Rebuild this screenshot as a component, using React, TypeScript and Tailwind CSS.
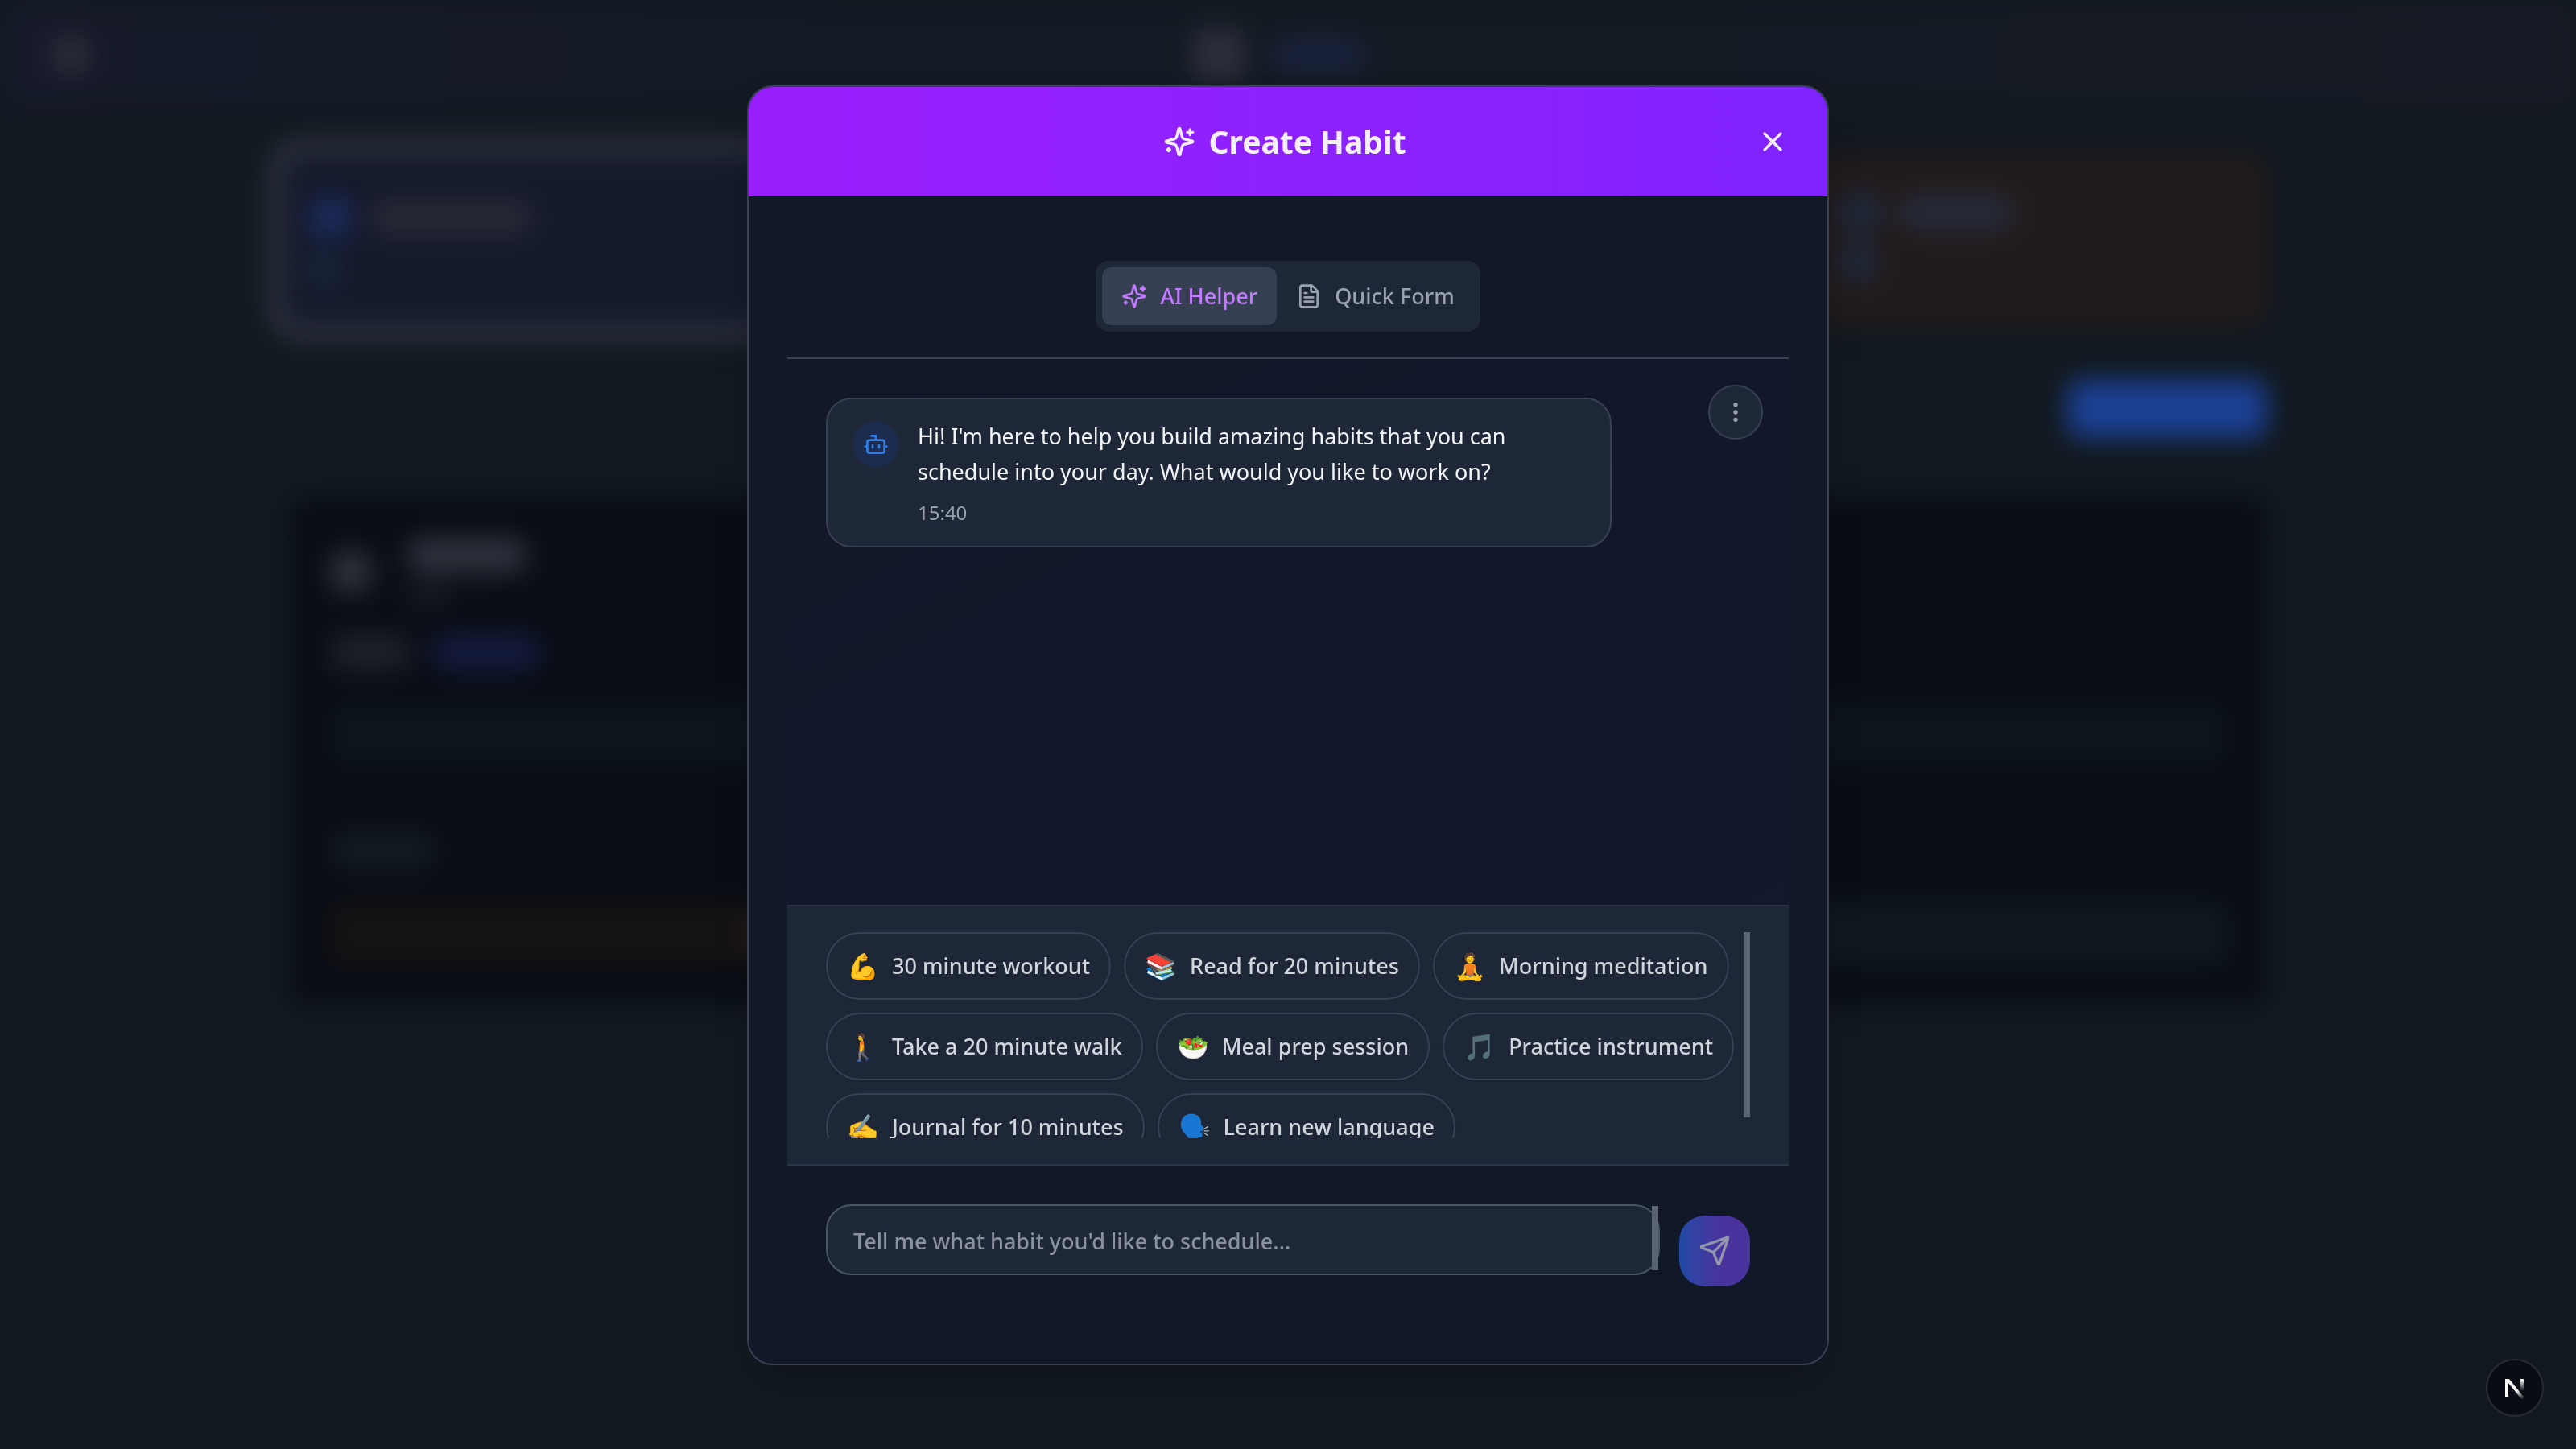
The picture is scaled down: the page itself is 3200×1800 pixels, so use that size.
import { useState } from "react";
import { Bot, EllipsisVertical, FileText, Send, X } from "lucide-react";

const suggestions = [
  { emoji: "💪", label: "30 minute workout" },
  { emoji: "📚", label: "Read for 20 minutes" },
  { emoji: "🧘", label: "Morning meditation" },
  { emoji: "🚶", label: "Take a 20 minute walk" },
  { emoji: "🥗", label: "Meal prep session" },
  { emoji: "🎵", label: "Practice instrument" },
  { emoji: "✍️", label: "Journal for 10 minutes" },
  { emoji: "🗣️", label: "Learn new language" },
];

function SparklesIcon({ className }: { className: string }) {
  return (
    <svg
      viewBox="0 0 24 24"
      fill="none"
      stroke="currentColor"
      strokeWidth="2"
      strokeLinecap="round"
      strokeLinejoin="round"
      className={className}
    >
      <path d="M9.937 15.500A2 2 0 0 0 8.500 14.063l-6.135-1.582a.5.5 0 0 1 0-.962L8.500 9.936A2 2 0 0 0 9.937 8.500l1.582-6.135a.5.5 0 0 1 .963 0L14.063 8.500A2 2 0 0 0 15.500 9.937l6.135 1.581a.5.5 0 0 1 0 .964L15.500 14.063a2 2 0 0 0-1.437 1.437l-1.582 6.135a.5.5 0 0 1-.963 0z" />
      <path d="M20 3v4" />
      <path d="M22 5h-4" />
      <path d="M4 17v2" />
      <path d="M5 18H3" />
    </svg>
  );
}

function Dashboard() {
  return (
    <div
      aria-hidden="true"
      className="min-h-screen overflow-hidden bg-[#121920]"
    >
      <div className="blur-lg">
        <div className="flex h-34 items-center justify-between bg-linear-to-r from-[#161a29] via-[#131a22] to-[#161a24] pr-21 pl-16">
          <div className="size-12 rounded-full bg-[#2d2e3a]" />
          <div className="flex items-center gap-8">
            <div className="size-16 rounded-2xl bg-[#2d2f3b]" />
            <div className="h-10 w-30 rounded-full bg-[#1b2340]" />
          </div>
          <div className="size-12" />
        </div>

        <div className="pr-96 pl-[360px]">
          <div className="mt-14 grid grid-cols-4 gap-8">
            <div className="-mx-3 -my-1 rounded-3xl bg-[#151a2c] px-9 py-14 ring-12 ring-[#41434f]">
              <div className="flex items-center gap-6">
                <div className="size-13 rounded-full bg-[#1b2c5f]" />
                <div className="h-10 w-50 rounded-full bg-[#282a35]" />
              </div>
              <div className="mt-5 size-9 rounded-full bg-[#1a2a41]" />
            </div>
            <div className="rounded-3xl bg-[#1a1c2a]" />
            <div className="rounded-3xl bg-[#1a1c2a]" />
            <div className="rounded-3xl bg-[#221b1c] px-14 py-11">
              <div className="flex items-center gap-5">
                <div className="size-14 rounded-full bg-[#1e283a]" />
                <div className="h-11 w-36 rounded-full bg-[#252b3a]" />
              </div>
              <div className="mt-2 size-13 rounded-full bg-[#1e283a]" />
            </div>
          </div>

          <div className="mt-17 flex justify-end">
            <div className="h-18 w-62 rounded-2xl bg-[#1b4194]" />
          </div>

          <div className="mt-19 rounded-3xl bg-[#090d15] px-12 py-12">
            <div className="flex items-center gap-10">
              <div className="size-14 rounded-full bg-[#2f313b]" />
              <div>
                <div className="h-11 w-38 rounded-full bg-[#30323d]" />
                <div className="mt-4 h-6 w-14 rounded-full bg-[#181c25]" />
              </div>
            </div>
            <div className="mt-9 flex gap-6">
              <div className="h-11 w-26 rounded-full bg-[#20212b]" />
              <div className="h-11 w-34 rounded-full bg-[#151b40]" />
            </div>
            <div className="mt-10 h-20 rounded-2xl bg-[#0d141c]" />
            <div className="mt-20 h-12 w-34 rounded-full bg-[#131a21]" />
            <div className="mt-10 grid grid-cols-4 gap-6">
              <div className="flex h-20 items-center justify-end rounded-2xl bg-[#141213]">
                <div className="h-9 w-14 rounded-full bg-[#33201b]" />
              </div>
              <div className="h-20" />
              <div className="col-span-2 h-20 rounded-2xl bg-[#10181f]" />
            </div>
          </div>
        </div>
      </div>
    </div>
  );
}

function ModalHeader() {
  return (
    <header className="grid h-34 grid-cols-[1fr_auto_1fr] items-center bg-linear-to-r from-[#9a1efc] to-[#8022ff] px-12 text-[#f4f0fb]">
      <span />
      <h2 className="flex items-center gap-4 pr-2 text-[39px] font-bold">
        <SparklesIcon className="size-10" />
        Create Habit
      </h2>
      <button type="button" aria-label="Close" className="justify-self-end">
        <X className="size-10" />
      </button>
    </header>
  );
}

function ModeTabs() {
  const [mode, setMode] = useState("ai");
  const activeStyle = "bg-[#374053] text-[#c27aff]";
  const idleStyle = "text-[#99a1af]";

  return (
    <div className="flex justify-center border-b-2 border-[#364153] py-8">
      <div className="flex rounded-2xl bg-[#1e2737] p-2 text-[27px] leading-10 font-medium">
        <button
          type="button"
          onClick={() => setMode("ai")}
          className={`flex items-center gap-4 rounded-xl px-6 py-4 ${mode === "ai" ? activeStyle : idleStyle}`}
        >
          <SparklesIcon className="size-8" />
          AI Helper
        </button>
        <button
          type="button"
          onClick={() => setMode("form")}
          className={`flex items-center gap-4 rounded-xl px-6 py-4 ${mode === "form" ? activeStyle : idleStyle}`}
        >
          <FileText className="size-8" />
          Quick Form
        </button>
      </div>
    </div>
  );
}

function Messages() {
  return (
    <div className="flex h-[678px] items-start justify-between bg-linear-to-br from-[#111827] via-[#13172e] via-60% to-[#14182f] pr-8 pl-12">
      <div className="mt-12 flex w-[976px] gap-6 rounded-4xl border-2 border-[#364153] bg-[#1e2737] px-8 py-6">
        <div className="mt-1 flex size-14 shrink-0 items-center justify-center rounded-full bg-[#1c2c50] text-[#2b7fe8]">
          <Bot className="size-8" />
        </div>
        <div>
          <p className="text-[27px] leading-[44px] text-[#f3f4f6]">
            Hi! I'm here to help you build amazing habits that you can
            <br />
            schedule into your day. What would you like to work on?
          </p>
          <p className="mt-3 text-[24px] leading-[34px] text-[#99a1af]">
            15:40
          </p>
        </div>
      </div>
      <button
        type="button"
        aria-label="More options"
        className="mt-8 flex size-17 items-center justify-center rounded-full border-2 border-[#364153] bg-[#1e2737] text-[#99a1af]"
      >
        <EllipsisVertical className="size-8" />
      </button>
    </div>
  );
}

function Suggestions() {
  return (
    <div className="border-y-2 border-[#2b3547] bg-[#1e2737] px-12 py-8">
      <div className="flex h-64 overflow-hidden">
        <div className="flex flex-1 flex-wrap content-start gap-4">
          {suggestions.map((item) => (
            <button
              key={item.label}
              type="button"
              className="flex h-21 items-center gap-4 rounded-full border-2 border-[#364153] bg-[#1e2737] px-6 text-[27px] font-medium whitespace-nowrap text-[#d1d5dc] shadow-sm"
            >
              <span className="text-[32px]">{item.emoji}</span>
              {item.label}
            </button>
          ))}
        </div>
        <div className="h-[230px] w-2 bg-[#5a6371]" />
      </div>
    </div>
  );
}

function Composer() {
  return (
    <form className="flex gap-6 p-12">
      <div className="flex h-22 flex-1 rounded-4xl border-2 border-[#4a5565] bg-[#1e2737]">
        <textarea
          aria-label="Message"
          rows={1}
          placeholder="Tell me what habit you'd like to schedule..."
          className="flex-1 resize-none overflow-hidden bg-transparent py-6 pl-8 text-[27px] leading-10 font-medium outline-none placeholder:text-[#8a92a0]"
        />
        <div className="h-20 w-2 bg-[#5a6371]" />
      </div>
      <button
        type="button"
        aria-label="Send"
        className="mt-[14px] flex size-22 items-center justify-center rounded-4xl bg-linear-to-r from-[#1d49a6] to-[#49329c] to-60% text-[#9296ab]"
      >
        <Send className="size-10" />
      </button>
    </form>
  );
}

export default function App() {
  return (
    <div className="relative font-['Noto_Sans',sans-serif]">
      <Dashboard />
      <div className="fixed inset-0 flex items-center justify-center pt-0.5">
        <div
          role="dialog"
          aria-label="Create Habit"
          className="w-full max-w-[1344px] overflow-hidden rounded-4xl border-2 border-[#364153] bg-[#111827] shadow-2xl"
        >
          <ModalHeader />
          <div className="p-12">
            <ModeTabs />
            <Messages />
            <Suggestions />
            <Composer />
          </div>
        </div>
      </div>
      <button
        type="button"
        aria-label="Open Next.js Dev Tools"
        className="fixed right-10 bottom-10 flex size-18 items-center justify-center rounded-full border-2 border-[#2b2a33] bg-[#0a0c14]"
      >
        <svg viewBox="0 0 28 28" className="size-7" fill="none">
          <defs>
            <linearGradient id="diagonal" x1="16" y1="18" x2="25" y2="28" gradientUnits="userSpaceOnUse">
              <stop stopColor="#fff" />
              <stop offset="1" stopColor="#fff" stopOpacity="0" />
            </linearGradient>
            <linearGradient id="stem" x1="0" y1="3" x2="0" y2="18" gradientUnits="userSpaceOnUse">
              <stop stopColor="#fff" />
              <stop offset="1" stopColor="#fff" stopOpacity="0" />
            </linearGradient>
          </defs>
          <path d="M2 3h4v22H2z" fill="#fff" />
          <path d="M2 3h5l18.500 23-2.500 3z" fill="url(#diagonal)" />
          <path d="M21 3h4v15h-4z" fill="url(#stem)" />
        </svg>
      </button>
    </div>
  );
}
